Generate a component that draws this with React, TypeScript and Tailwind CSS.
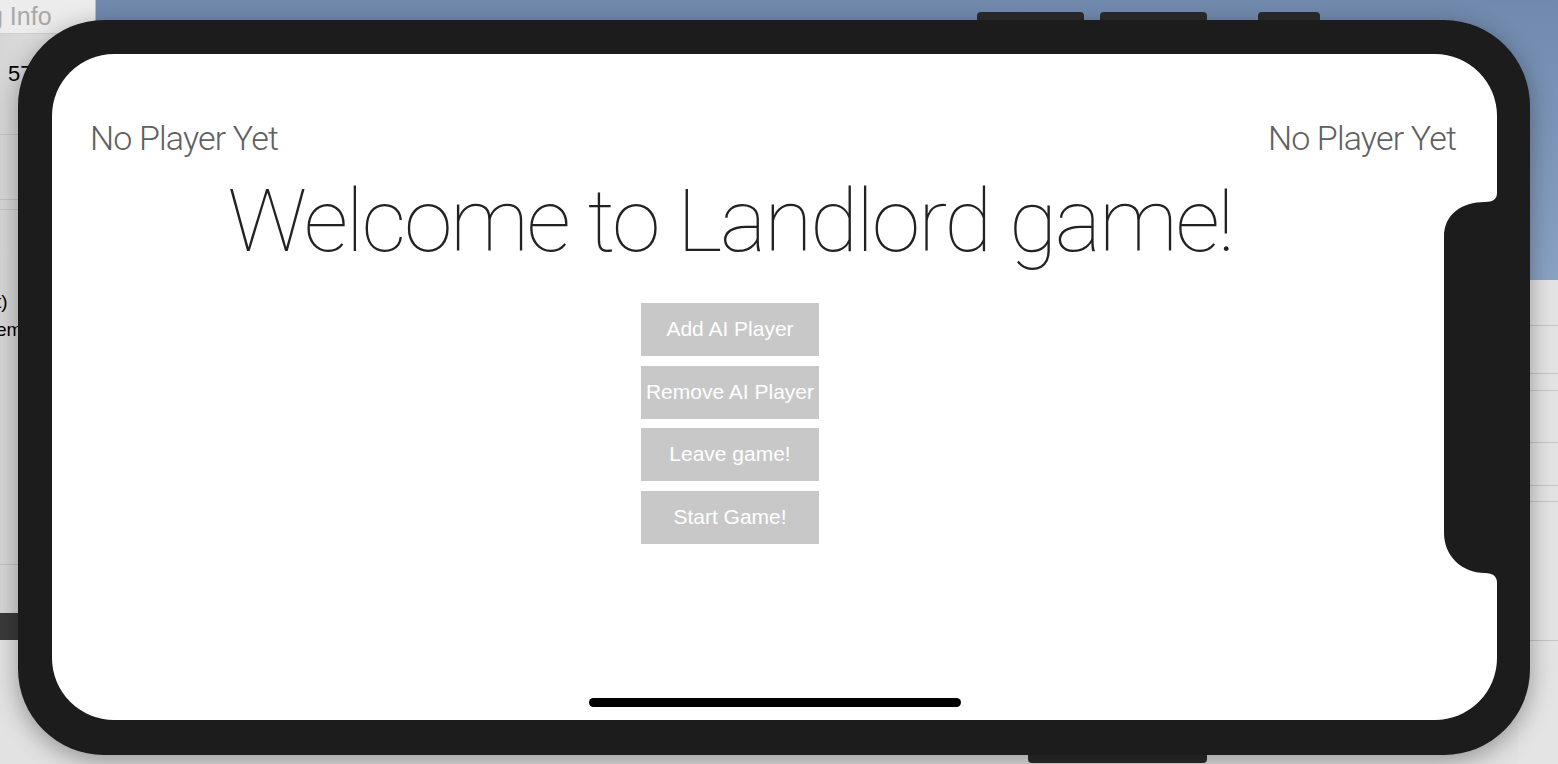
import React from 'react'

const buttons = ['Add AI Player', 'Remove AI Player', 'Leave game!', 'Start Game!']

function Notch() {
  return (
    <svg className="absolute right-0 top-[130px]" width="60" height="410" viewBox="0 0 60 410">
      <path
        d="M60 0 L60 9 Q60 18 48 18 C25 18 7 30 7 53 L7 349 C7 372 25 389 48 389 Q60 389 60 399 L60 410 Z"
        fill="#1c1c1c"
      />
    </svg>
  )
}

function SideWindow() {
  return (
    <div className="absolute left-0 top-0 w-[96px] h-[640px] flex flex-col bg-gradient-to-r from-[#d6d6d6] to-[#e6e6e6] border-r border-[#bdbdbd]">
      <div className="h-[35px] bg-[#ececec] border-b border-[#cfcfcf] text-[25px] text-[#a8a8a8] leading-[32px] -ml-[11px] whitespace-nowrap">
        g Info
      </div>
      <div className="text-[22px] text-black mt-[23px] ml-[8px]">57</div>
      <div className="mt-[44px] border-t border-[#c4c4c4]" />
      <div className="mt-[64px] border-t border-[#c4c4c4]" />
      <div className="mt-[9px] border-t border-[#c4c4c4]" />
      <div className="mt-[78px] text-[19px] leading-[28px] text-black -ml-[4px]">
        t)
        <br />
        em
      </div>
      <div className="mt-[220px] border-t border-[#c4c4c4]" />
      <div className="mt-[48px] h-[28px] bg-[#3a3a3a]" />
    </div>
  )
}

function RightList() {
  return (
    <div className="absolute right-0 top-[280px] w-[40px] h-[484px] flex flex-col bg-[#e4e4e4]">
      <div className="mt-[45px] border-t border-[#c6c6c6]" />
      <div className="mt-[47px] border-t border-[#c6c6c6]" />
      <div className="mt-[16px] border-t border-[#c6c6c6]" />
      <div className="mt-[51px] border-t border-[#c6c6c6]" />
      <div className="mt-[42px] border-t border-[#c6c6c6]" />
      <div className="mt-[15px] border-t border-[#c6c6c6]" />
      <div className="mt-[138px] border-t border-[#c6c6c6]" />
    </div>
  )
}

export default function App() {
  return (
    <div className="relative w-[1558px] h-[764px] overflow-hidden bg-[#e2e2e2] font-['Liberation_Sans',sans-serif]">
      {/* desktop behind the simulator */}
      <div className="absolute inset-x-0 top-0 h-[280px] bg-gradient-to-b from-[#7089ad] to-[#8aa3c4]" />
      <SideWindow />
      <RightList />

      {/* hardware buttons peeking out */}
      <div className="absolute left-[977px] top-[12px] flex gap-[16px]">
        <div className="w-[107px] h-[20px] rounded-[4px] bg-[#2b2b2b]" />
        <div className="w-[107px] h-[20px] rounded-[4px] bg-[#2b2b2b]" />
        <div className="ml-[35px] w-[62px] h-[20px] rounded-[4px] bg-[#2b2b2b]" />
      </div>
      <div className="absolute left-[1028px] top-[745px] w-[179px] h-[18px] rounded-[4px] bg-[#2b2b2b]" />

      {/* simulator frame */}
      <div className="absolute left-[18px] top-[20px] w-[1512px] h-[735px] rounded-[86px] bg-[#1c1c1c] pl-[34px] pt-[34px] shadow-[0_6px_24px_rgba(0,0,0,0.35)]">
        <div className="relative w-[1445px] h-[666px] rounded-[62px] bg-white overflow-hidden">
          <div className="flex justify-between pl-[38px] pr-[41px] pt-[64px] font-['Roboto',sans-serif] font-light text-[34px] leading-[40px] text-[#606060] tracking-[-0.85px]">
            <span>No Player Yet</span>
            <span>No Player Yet</span>
          </div>
          <div className="w-[1356px] flex flex-col items-center">
            <h1 className="mt-[13px] font-['Roboto',sans-serif] font-thin text-[88px] leading-[100px] text-[#222] tracking-[-2.3px] whitespace-nowrap">
              Welcome to Landlord game!
            </h1>
            <div className="mt-[32px] flex flex-col gap-[9.5px]">
              {buttons.map((b) => (
                <button
                  key={b}
                  className="w-[178px] h-[53px] bg-[#c8c8c8] text-white text-[21px] leading-none pb-[2px] whitespace-nowrap flex items-center justify-center"
                >
                  {b}
                </button>
              ))}
            </div>
          </div>
          <Notch />
          <div className="absolute bottom-[13px] left-1/2 -translate-x-1/2 w-[372px] h-[9px] rounded-full bg-black" />
        </div>
      </div>
    </div>
  )
}
